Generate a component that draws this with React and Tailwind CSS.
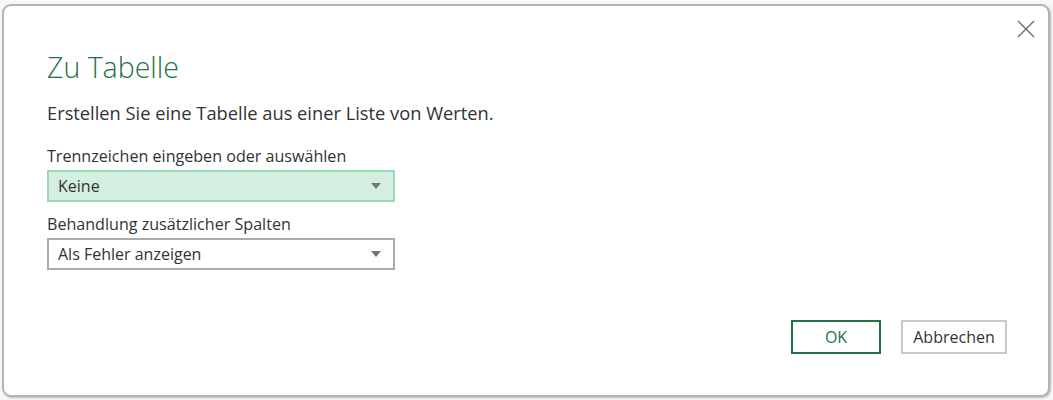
import React from 'react';

const font = { fontFamily: '"Open Sans", "Noto Sans", sans-serif' };

const Caret = () => (
    <svg width="10" height="6" viewBox="0 0 10 6" className="shrink-0">
        <path d="M0 0 L10 0 L5 6 Z" fill="#777" />
    </svg>
);

const Select = ({ value, active }) => (
    <div
        className={`w-[348px] h-[32px] flex items-center justify-between pl-[9px] pr-[12px] border-2 text-[16px] text-[#333] ${
            active ? 'bg-[#d4efe0] border-[#9dd9bb]' : 'bg-white border-[#ababab]'
        }`}
    >
        <span>{value}</span>
        <Caret />
    </div>
);

const App = () => {
    return (
        <div className="w-[1053px] h-[400px] bg-[#f7f7f7] pt-[4px] pl-[2px] pr-[3px] pb-[3px]" style={font}>
            <div className="relative h-full bg-white border-2 border-[#b4b4b4] rounded-[9px] shadow-[1px_1px_2px_rgba(0,0,0,0.25)] flex flex-col pl-[43px] pr-[41px]">
                {/* close */}
                <button className="absolute top-[13px] right-[12px] w-[20px] h-[20px] flex items-center justify-center">
                    <svg width="18" height="18" viewBox="0 0 18 18">
                        <path d="M1 1 L17 17 M17 1 L1 17" stroke="#666" strokeWidth="1.3" />
                    </svg>
                </button>

                <h1 className="mt-[43px] text-[28.5px] leading-[36px] font-light text-[#217346]">Zu Tabelle</h1>
                <p className="mt-[16px] text-[18.3px] leading-[24px] text-[#333]">
                    Erstellen Sie eine Tabelle aus einer Liste von Werten.
                </p>

                <div className="mt-[20px] text-[16.1px] leading-[22px] text-[#333]">Trennzeichen eingeben oder auswählen</div>
                <div className="mt-[3px]">
                    <Select value="Keine" active />
                </div>

                <div className="mt-[11px] text-[16.1px] leading-[22px] text-[#333]">Behandlung zusätzlicher Spalten</div>
                <div className="mt-[3px]">
                    <Select value="Als Fehler anzeigen" />
                </div>

                <div className="flex justify-end gap-[20px] mt-[50px]">
                    <button className="w-[90px] h-[34px] border-2 border-[#217346] text-[16px] text-[#217346]">OK</button>
                    <button className="w-[106px] h-[34px] border-2 border-[#c8c8c8] text-[16px] text-[#333]">Abbrechen</button>
                </div>
            </div>
        </div>
    );
};

export default App;
